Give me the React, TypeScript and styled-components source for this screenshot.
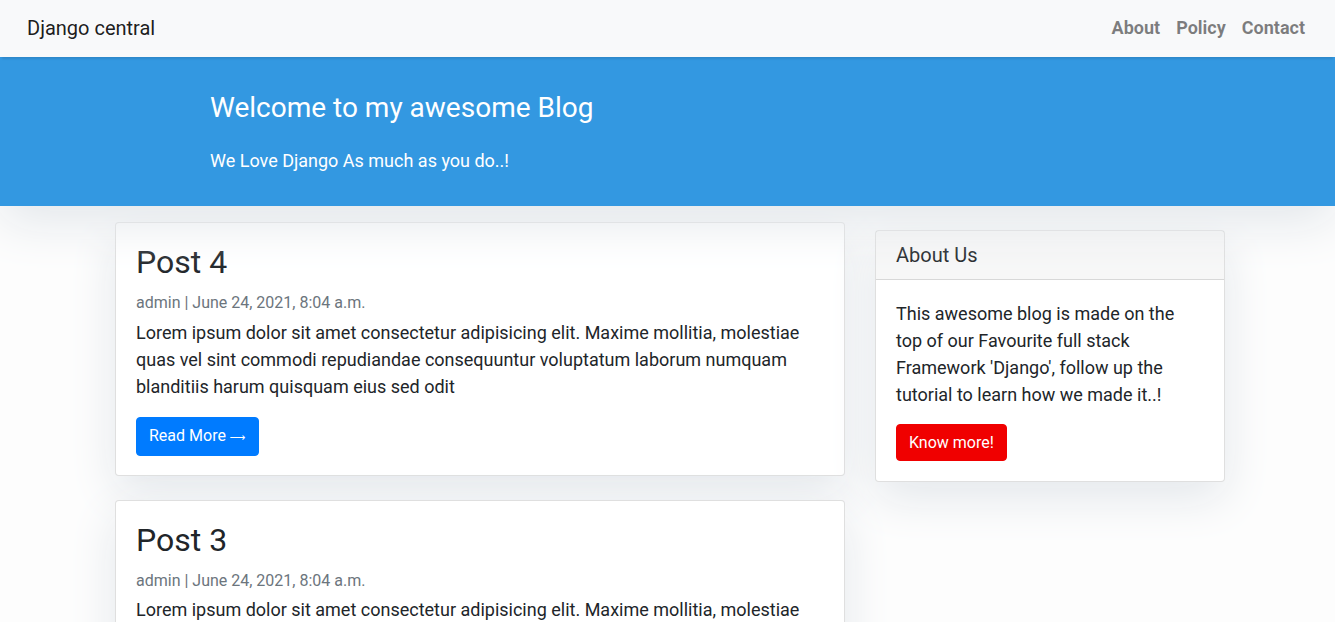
import React, { FC } from "react";
import styled, { createGlobalStyle } from "styled-components";

const GlobalStyle = createGlobalStyle`
  * { box-sizing: border-box; }
  body {
    margin: 0;
    font-family: Roboto, "Liberation Sans", sans-serif;
    font-size: 18px;
    color: #212529;
    background-color: #fdfdfd;
  }
`;

interface IPost {
  title: string;
  author: string;
  createdOn: string;
  content: string;
}

const posts: IPost[] = [
  {
    title: "Post 4",
    author: "admin",
    createdOn: "June 24, 2021, 8:04 a.m.",
    content:
      "Lorem ipsum dolor sit amet consectetur adipisicing elit. Maxime mollitia, molestiae quas vel sint commodi repudiandae consequuntur voluptatum laborum numquam blanditiis harum quisquam eius sed odit",
  },
  {
    title: "Post 3",
    author: "admin",
    createdOn: "June 24, 2021, 8:04 a.m.",
    content:
      "Lorem ipsum dolor sit amet consectetur adipisicing elit. Maxime mollitia, molestiae quas vel sint commodi repudiandae consequuntur voluptatum laborum numquam blanditiis harum quisquam eius sed odit",
  },
];

const Navbar = styled.nav`
  height: 57px;
  display: flex;
  align-items: center;
  justify-content: space-between;
  padding: 0 30px 0 27px;
  background: #f8f9fa;
  box-shadow: 0 4px 2px -2px rgba(0, 0, 0, 0.1);
  position: relative;
  z-index: 2;
`;

const Brand = styled.a`
  font-size: 20px;
  color: rgba(0, 0, 0, 0.9);
  text-decoration: none;
  margin-top: -2px;
`;

const NavLinks = styled.ul`
  display: flex;
  gap: 16px;
  list-style: none;
  margin: -2px 0 0;
  padding: 0;
`;

const NavLink = styled.a`
  font-size: 18px;
  font-weight: 700;
  color: rgba(0, 0, 0, 0.5);
  text-decoration: none;
`;

const Masthead = styled.header`
  background: #3398e1;
  box-shadow: 0 16px 48px #e3e7eb;
  height: 149px;
  padding: 34px 0 0 210px;
  color: #fff;
  position: relative;
  z-index: 1;
`;

const HeroTitle = styled.h3`
  margin: 0 0 22px;
  font-size: 28px;
  font-weight: 400;
  line-height: 1.2;
`;

const HeroText = styled.p`
  margin: 0;
  font-size: 18px;
  line-height: 1.5;
`;

const Layout = styled.main`
  display: grid;
  grid-template-columns: 730px 350px;
  gap: 30px;
  justify-content: center;
  padding: 16px 0 0 5px;
`;

const Column = styled.div<{ $offset?: number }>`
  display: flex;
  flex-direction: column;
  gap: 24px;
  padding-top: ${(p) => p.$offset ?? 0}px;
`;

const Card = styled.article`
  background: #fff;
  border: 1px solid rgba(0, 0, 0, 0.125);
  border-radius: 4px;
  box-shadow: 0 16px 48px #e3e7eb;
`;

const CardBody = styled.div<{ $bottom?: number }>`
  padding: 20px 20px ${(p) => p.$bottom ?? 20}px;
`;

const PostTitle = styled.h2`
  margin: 0 0 12px;
  font-size: 32px;
  font-weight: 400;
  line-height: 1.2;
`;

const Meta = styled.p`
  margin: 0 0 6px;
  font-size: 16px;
  line-height: 1.2;
  color: #6c757d;
`;

const CardText = styled.p<{ $gap?: number }>`
  margin: 0 0 ${(p) => p.$gap ?? 16}px;
  line-height: 27px;
`;

const Button = styled.a<{ $variant: "primary" | "danger" }>`
  display: inline-block;
  padding: 6px 12px;
  font-size: 16px;
  line-height: 23px;
  color: #fff;
  text-decoration: none;
  border-radius: 4px;
  border: 1px solid
    ${(p) => (p.$variant === "primary" ? "#007bff" : "#f00000")};
  background: ${(p) => (p.$variant === "primary" ? "#007bff" : "#f00000")};
`;

const Arrow = styled.span`
  font-family: "DejaVu Sans", sans-serif;
  font-size: 11px;
`;

const CardHeader = styled.div`
  padding: 12px 20px;
  font-size: 20px;
  line-height: 24px;
  background: rgba(0, 0, 0, 0.03);
  border-bottom: 1px solid rgba(0, 0, 0, 0.125);
`;

const PostCard: FC<{ post: IPost }> = ({ post }) => (
  <Card>
    <CardBody $bottom={19}>
      <PostTitle>{post.title}</PostTitle>
      <Meta>
        {post.author} | {post.createdOn}
      </Meta>
      <CardText $gap={17}>{post.content}</CardText>
      <Button $variant="primary" href="#">
        Read More <Arrow>&#x27F6;</Arrow>
      </Button>
    </CardBody>
  </Card>
);

export default function App() {
  return (
    <>
      <GlobalStyle />
      <Navbar>
        <Brand href="#">Django central</Brand>
        <NavLinks>
          <li>
            <NavLink href="#">About</NavLink>
          </li>
          <li>
            <NavLink href="#">Policy</NavLink>
          </li>
          <li>
            <NavLink href="#">Contact</NavLink>
          </li>
        </NavLinks>
      </Navbar>
      <Masthead>
        <HeroTitle>Welcome to my awesome Blog</HeroTitle>
        <HeroText>We Love Django As much as you do..!</HeroText>
      </Masthead>
      <Layout>
        <Column>
          {posts.map((post) => (
            <PostCard key={post.title} post={post} />
          ))}
        </Column>
        <Column $offset={8}>
          <Card>
            <CardHeader>About Us</CardHeader>
            <CardBody>
              <CardText>
                This awesome blog is made on the top of our Favourite full
                stack Framework 'Django', follow up the tutorial to learn how
                we made it..!
              </CardText>
              <Button $variant="danger" href="#">
                Know more!
              </Button>
            </CardBody>
          </Card>
        </Column>
      </Layout>
    </>
  );
}
